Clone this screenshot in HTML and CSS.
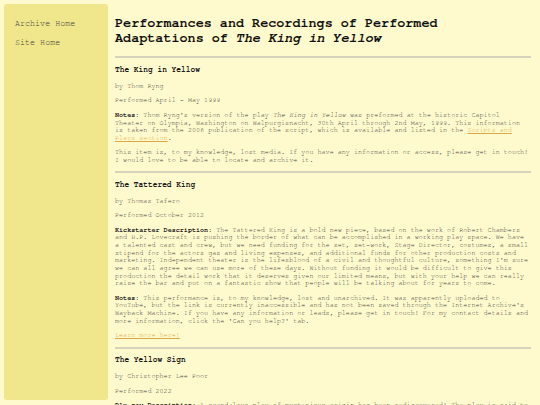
FILE: index.html
```html
<!DOCTYPE html>
<html>
<head>
<meta charset="utf-8">
<title>Performances and Recordings</title>
<link rel="stylesheet" href="styles.css">
</head>
<body>
<div class="page">
  <nav class="sidebar">
    <a class="nav-link" href="#">Archive Home</a>
    <a class="nav-link" href="#">Site Home</a>
  </nav>
  <main class="main">
    <h1 class="title">Performances and Recordings of Performed Adaptations of <em>The King in Yellow</em></h1>
    <hr class="rule">
    <section class="entry">
      <h3 class="entry-title">The King in Yellow</h3>
      <p>by Thom Ryng</p>
      <p>Performed April - May 1999</p>
      <p><b>Notes:</b> Thom Ryng's version of the play <i>The King in Yellow</i> was preformed at the historic Capitol Theater on Olympia, Washington on Walpurgisnacht, 30th April through 2nd May, 1999. This information is taken from the 2006 publication of the script, which is available and listed in the <a class="link" href="#">Scripts and Plays section</a>.</p>
      <p>This item is, to my knowledge, lost media. If you have any information or access, please get in touch! I would love to be able to locate and archive it.</p>
    </section>
    <hr class="rule">
    <section class="entry">
      <h3 class="entry-title">The Tattered King</h3>
      <p>by Thomas Tafero</p>
      <p>Performed October 2012</p>
      <p><b>Kickstarter Description</b>: The Tattered King is a bold new piece, based on the work of Robert Chambers and H.P. Lovecraft is pushing the border of what can be accomplished in a working play space. We have a talented cast and crew, but we need funding for the set, set-work, Stage Director, costumes, a small stipend for the actors gas and living expenses, and additional funds for other production costs and marketing. Independent theater is the lifesblood of a civil and thoughtful culture, something I'm sure we can all agree we can use more of these days. Without funding it would be difficult to give this production the detail work that it deserves given our limited means, but with your help we can really raise the bar and put on a fantastic show that people will be talking about for years to come.</p>
      <p><b>Notes:</b> This performance is, to my knowledge, lost and unarchived. It was apparently uploaded to YouTube, but the link is currently inaccessible and has not been saved through the Internet Archive's Wayback Machine. If you have any information or leads, please get in touch! For my contact details and more information, click the 'Can you help?' tab.</p>
      <p><a class="link" href="#">Learn more here!</a></p>
    </section>
    <hr class="rule">
    <section class="entry">
      <h3 class="entry-title">The Yellow Sign</h3>
      <p>by Christopher Lee Poor</p>
      <p>Performed 2022</p>
      <p><b>Blu-ray Description:</b> A scandalous play of mysterious origin has been rediscovered! The play is said to drive all who read it mad, and now it has been brought to the stage for the very first time.</p>
    </section>
  </main>
</div>
</body>
</html>
```
FILE: styles.css
```css
html, body {
  margin: 0;
  background: #fffacd;
}
body {
  font-family: "Nimbus Mono PS", "Nimbus Mono L", "FreeMono", "Liberation Mono", "Courier New", monospace;
  color: #46453f;
  font-size: 6.75px;
  line-height: 7.66px;
}
.page {
  display: flex;
  align-items: flex-start;
  gap: 7px;
  padding: 4px 8px 0 4px;
}
.sidebar {
  flex: none;
  width: 104px;
  height: 396px;
  box-sizing: border-box;
  background: #f0e68c;
  border-radius: 3px;
  padding: 15px 11px;
  display: flex;
  flex-direction: column;
  gap: 9px;
}
.nav-link {
  font-size: 8.4px;
  line-height: 9.5px;
  color: #46453f;
  text-decoration: none;
}
.main {
  width: 416px;
  padding-top: 12px;
}
.title {
  font-size: 13.44px;
  line-height: 15.2px;
  font-weight: bold;
  color: #111;
  margin: 0 0 10px;
}
.rule {
  border: 0;
  border-top: 2px solid #d6d2bc;
  margin: 3.4px 0;
  height: 0;
}
.entry-title {
  font-size: 7.86px;
  line-height: 8.9px;
  font-weight: bold;
  color: #1a1a1a;
  margin: 7.86px 0;
}
.entry p {
  margin: 6.75px 0;
}
.entry b {
  color: #1e1e1e;
}
.link {
  color: #dca846;
}
```
